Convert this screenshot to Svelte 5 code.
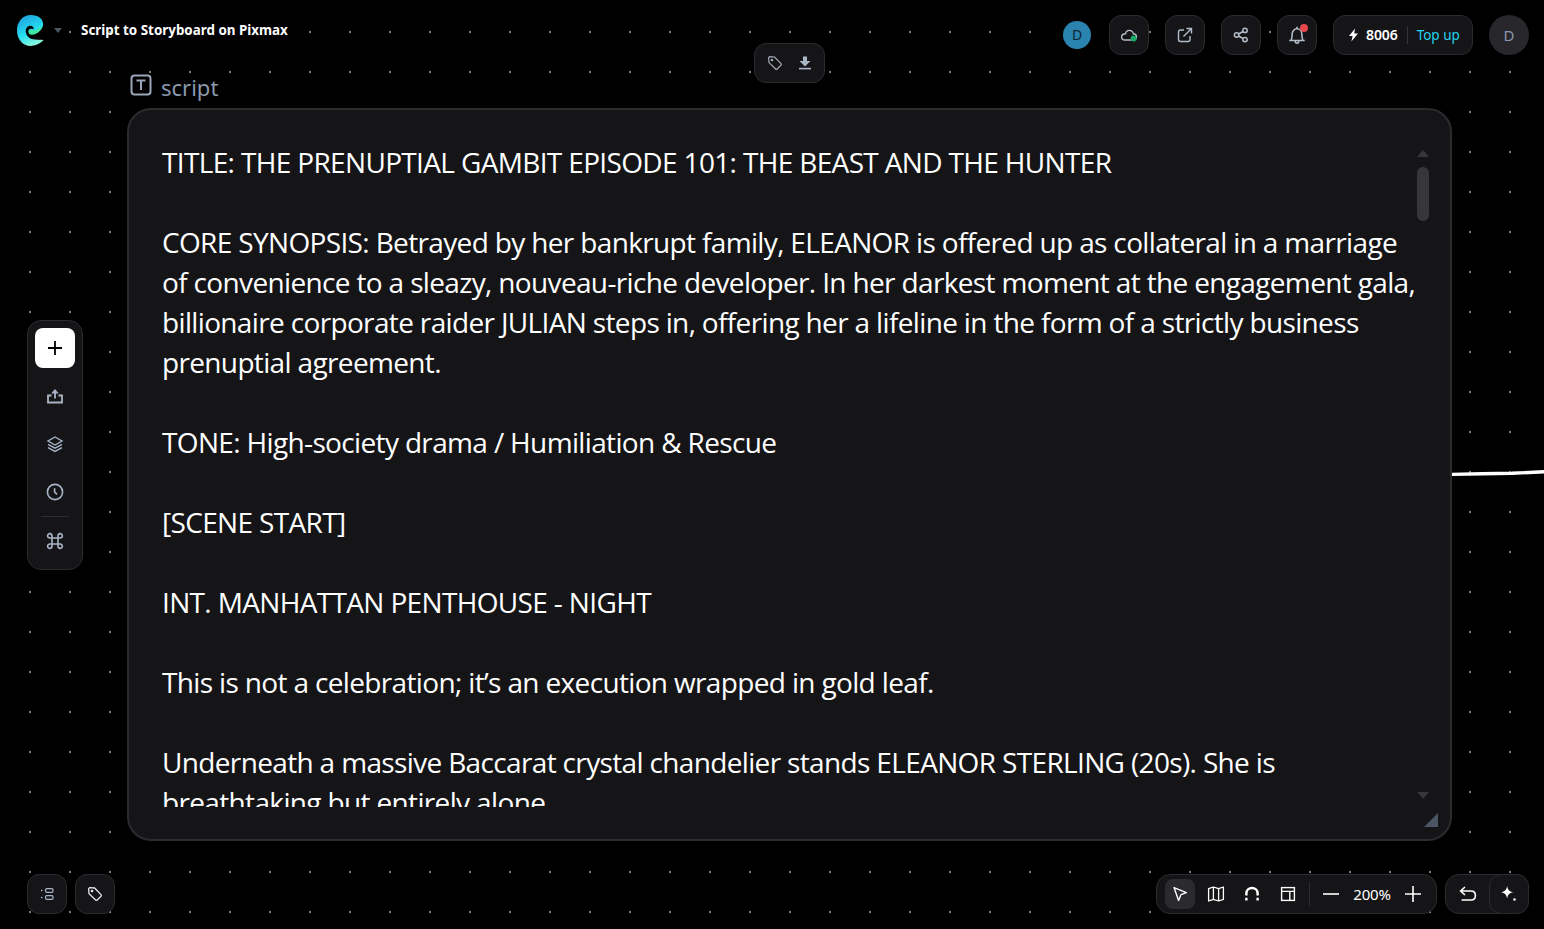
<script>
	const paragraphs = [
		'TITLE: THE PRENUPTIAL GAMBIT EPISODE 101: THE BEAST AND THE HUNTER',
		'',
		'CORE SYNOPSIS: Betrayed by her bankrupt family, ELEANOR is offered up as collateral in a marriage of convenience to a sleazy, nouveau-riche developer. In her darkest moment at the engagement gala, billionaire corporate raider JULIAN steps in, offering her a lifeline in the form of a strictly business prenuptial agreement.',
		'',
		'TONE: High-society drama / Humiliation & Rescue',
		'',
		'[SCENE START]',
		'',
		'INT. MANHATTAN PENTHOUSE - NIGHT',
		'',
		'This is not a celebration; it’s an execution wrapped in gold leaf.',
		'',
		'Underneath a massive Baccarat crystal chandelier stands ELEANOR STERLING (20s). She is breathtaking but entirely alone.'
	];
</script>

<div class="canvas">
	<svg class="edge" width="92" height="10" viewBox="0 0 92 10">
		<path d="M0 6.4 L30 5.8 L60 5.2 L92 3.8" fill="none" stroke="#fff" stroke-width="3.4" />
	</svg>

	<header class="topbar">
		<div class="brand">
			<svg class="logo" width="27" height="31" viewBox="0 0 30 30" preserveAspectRatio="none">
				<defs>
					<linearGradient id="logo-grad" x1="0.2" y1="0" x2="0.6" y2="1">
						<stop offset="0" stop-color="#1c9fe0" />
						<stop offset="0.6" stop-color="#27e0f0" />
						<stop offset="1" stop-color="#8ff7dc" />
					</linearGradient>
				</defs>
				<path
					d="M15 0C24 0 29.5 4 29 9.5C28.5 15 22 18 16.5 17.5C13.5 17.2 12 16 13 14.5C14 13 16.5 13 18.5 13.8C19 11.5 16.5 10 14 10.5C10.5 11.2 9 14.5 10 17.5C11.2 21.5 15 23.5 20 23.8C24 24 28 23.5 29.5 24.5C25 28 20 30 15 30C6.5 30 0 23.5 0 15C0 6.5 6.5 0 15 0Z"
					fill="url(#logo-grad)"
				/>
				<path d="M13 15.2C14.5 13.8 17 14 18.5 15C22 14.8 26 13 27.5 10.5C27.5 15 22 19.8 15.5 19C13.5 18.8 12.2 17 13 15.2Z" fill="#3ee6a0" />
			</svg>
			<span class="caret"></span>
			<span class="title">Script to Storyboard on Pixmax</span>
		</div>

		<div class="actions">
			<span class="avatar-small">D</span>
			<button class="square" aria-label="cloud">
				<svg width="18" height="18" viewBox="0 0 18 18" fill="none" stroke="#b4bcc9" stroke-width="1.4">
					<path d="M5 14H12.5C15 14 16.4 12.6 16.4 10.8C16.4 9 15 7.8 13.4 7.8C12.8 5.6 11.2 4.4 9.4 4.4C7.2 4.4 5.8 6 5.6 7.8C3.4 7.8 1.6 9 1.6 11C1.6 12.8 3 14 5 14Z" />
					<circle cx="13.6" cy="12.4" r="3" fill="#16a765" stroke="none" />
				</svg>
			</button>
			<button class="square" aria-label="open">
				<svg width="16" height="16" viewBox="0 0 16 16" fill="none" stroke="#b4bcc9" stroke-width="1.4">
					<path d="M7 3H3.5C2.4 3 1.5 3.9 1.5 5V12.5C1.5 13.6 2.4 14.5 3.5 14.5H11C12.1 14.5 13 13.6 13 12.5V9" />
					<path d="M6.5 9.5L14 2M9.5 1.5H14.5V6.5" />
				</svg>
			</button>
			<button class="square" aria-label="share">
				<svg width="16" height="16" viewBox="0 0 16 16" fill="none" stroke="#b4bcc9" stroke-width="1.5">
					<circle cx="3.6" cy="8" r="2.2" />
					<circle cx="12" cy="3.4" r="2.2" />
					<circle cx="12" cy="12.6" r="2.2" />
					<path d="M5.6 7L10 4.5M5.6 9L10 11.5" />
				</svg>
			</button>
			<button class="square bell" aria-label="notifications">
				<svg width="20" height="20" viewBox="0 0 18 18" fill="none" stroke="#b4bcc9" stroke-width="1.4">
					<path d="M2 14H16M3.6 14C4.4 12.6 4.6 11 4.6 8.6C4.6 5.6 6.4 3.4 9 3.4C11.6 3.4 13.4 5.6 13.4 8.6C13.4 11 13.6 12.6 14.4 14" />
					<path d="M7.4 14.4C7.4 15.6 8 16.4 9 16.4C10 16.4 10.6 15.6 10.6 14.4M9 1.6V3.4" />
				</svg>
				<span class="dot"></span>
			</button>
			<div class="credits">
				<svg width="11" height="14" viewBox="0 0 11 14"><path d="M7 0.5L1 8H4.6L3.4 13.5L10 5.6H6.2L7 0.5Z" fill="#fff" /></svg>
				<span class="amount">8006</span>
				<span class="sep"></span>
				<span class="topup">Top up</span>
			</div>
			<span class="avatar">D</span>
		</div>
	</header>

	<div class="mini-tools">
		<svg width="16" height="16" viewBox="0 0 16 16" fill="none" stroke="#a5acb8" stroke-width="1.2">
			<path d="M1.6 2.6L2.6 1.6L7.6 2L14 8.6C14.5 9.1 14.5 9.7 14 10.2L10.2 14C9.7 14.5 9.1 14.5 8.6 14L2 7.6Z" />
			<circle cx="5" cy="5" r="0.7" />
		</svg>
		<svg width="14" height="14" viewBox="0 0 14 14" fill="#a9b4c6">
			<path d="M5 0.5H9V5H12.5L7 10.4L1.5 5H5Z" />
			<rect x="1" y="11.8" width="12" height="1.6" />
		</svg>
	</div>

	<section class="node">
		<div class="node-label">
			<svg width="22" height="22" viewBox="0 0 22 22" fill="none" stroke="#9aa5b8" stroke-width="2">
				<rect x="1.5" y="1.5" width="19" height="19" rx="3" />
				<path d="M6.5 6.6H15.5M11 6.6V16" />
			</svg>
			<span>script</span>
		</div>
		<div class="card">
			<div class="content">
				{#each paragraphs as p}
					<p>{p}</p>
				{/each}
			</div>
			<div class="scrollbar">
				<span class="arrow up"></span>
				<span class="thumb"></span>
				<span class="arrow down"></span>
			</div>
			<span class="resize"></span>
		</div>
	</section>

	<nav class="sidebar">
		<button class="add" aria-label="add">
			<svg width="18" height="18" viewBox="0 0 18 18" stroke="#000" stroke-width="1.8"><path d="M9 2V16M2 9H16" /></svg>
		</button>
		<button class="side-btn" aria-label="upload">
			<svg width="18" height="18" viewBox="0 0 18 18" fill="none" stroke="#a9b4c6" stroke-width="1.8">
				<path d="M5.5 8.5H2V15.5H16V8.5H12.5" />
				<path d="M9 11.5V4" />
				<path d="M5.2 6.4L9 2L12.8 6.4Z" fill="#a9b4c6" stroke="none" />
			</svg>
		</button>
		<button class="side-btn" aria-label="layers">
			<svg width="18" height="18" viewBox="0 0 18 18" fill="none" stroke="#a9b4c6" stroke-width="1.4">
				<path d="M9 2L16 6L9 10L2 6Z" />
				<path d="M2 9.4L9 13.2L16 9.4M2 12.6L9 16.4L16 12.6" />
			</svg>
		</button>
		<button class="side-btn" aria-label="history">
			<svg width="18" height="18" viewBox="0 0 18 18" fill="none" stroke="#a9b4c6" stroke-width="1.6">
				<circle cx="9" cy="9" r="7.6" />
				<path d="M8.6 5.2V9L11 11.4" />
			</svg>
		</button>
		<span class="side-sep"></span>
		<button class="side-btn" aria-label="shortcuts">
			<svg width="18" height="18" viewBox="0 0 18 18" fill="none" stroke="#a9b4c6" stroke-width="1.6">
				<path d="M6 6H12V12H6ZM6 6H4A2.2 2.2 0 1 1 6 4ZM12 6V4A2.2 2.2 0 1 1 14 6ZM12 12H14A2.2 2.2 0 1 1 12 14ZM6 12V14A2.2 2.2 0 1 1 4 12Z" />
			</svg>
		</button>
	</nav>

	<footer class="bottombar">
		<div class="bottom-left">
			<button class="square" aria-label="outline">
				<svg width="14" height="14" viewBox="0 0 14 14" fill="none" stroke="#a9b4c6" stroke-width="1.2">
					<rect x="5.6" y="1.6" width="7.4" height="3.8" rx="1.2" />
					<rect x="5.6" y="8.6" width="7.4" height="3.8" rx="1.2" />
					<path d="M1 2.4L3 3.5L1 4.6ZM1 9.4L3 10.5L1 11.6Z" fill="#a9b4c6" stroke="none" />
				</svg>
			</button>
			<button class="square" aria-label="tags">
				<svg width="16" height="16" viewBox="0 0 16 16" fill="none" stroke="#e4e6ea" stroke-width="1.3">
					<path d="M1.6 2.6L2.6 1.6L7.6 2L14 8.6C14.5 9.1 14.5 9.7 14 10.2L10.2 14C9.7 14.5 9.1 14.5 8.6 14L2 7.6Z" />
					<circle cx="5" cy="5" r="0.7" />
				</svg>
			</button>
		</div>

		<div class="bottom-right">
			<div class="toolbar">
				<button class="tool active" aria-label="select">
					<svg width="16" height="16" viewBox="0 0 16 16" fill="none" stroke="#fff" stroke-width="1.4" stroke-linejoin="round">
						<path d="M2 1.6L14.4 6.6L9 8.6L6.6 14.4Z" />
					</svg>
				</button>
				<button class="tool" aria-label="map">
					<svg width="18" height="18" viewBox="0 0 18 18" fill="none" stroke="#fff" stroke-width="1.3" stroke-linejoin="round">
						<path d="M1.6 3.6L6.4 2L11.6 3.6L16.4 2V14.4L11.6 16L6.4 14.4L1.6 16ZM6.4 2V14.4M11.6 3.6V16" />
					</svg>
				</button>
				<button class="tool" aria-label="snap">
					<svg width="18" height="18" viewBox="0 0 18 18" fill="none" stroke="#fff" stroke-width="2.4">
						<path d="M3.4 10.4V8.4C3.4 5 6 3 9 3C12 3 14.6 5 14.6 8.4V10.4" />
						<path d="M3.4 12.8V15.6M14.6 12.8V15.6" />
					</svg>
				</button>
				<button class="tool" aria-label="layout">
					<svg width="16" height="16" viewBox="0 0 16 16" fill="none" stroke="#fff" stroke-width="1.4">
						<rect x="1.6" y="1.6" width="12.8" height="12.8" />
						<path d="M1.6 5.4H14.4M9.8 5.4V14.4" />
					</svg>
				</button>
				<span class="tool-sep"></span>
				<button class="tool zoom" aria-label="zoom out">
					<svg width="16" height="16" viewBox="0 0 16 16" stroke="#fff" stroke-width="1.6"><path d="M0 8H16" /></svg>
				</button>
				<span class="percent">200%</span>
				<button class="tool zoom" aria-label="zoom in">
					<svg width="16" height="16" viewBox="0 0 16 16" stroke="#fff" stroke-width="1.6"><path d="M0 8H16M8 0V16" /></svg>
				</button>
			</div>
			<div class="history">
				<button class="undo" aria-label="undo">
					<svg width="18" height="16" viewBox="0 0 18 16" fill="none" stroke="#fff" stroke-width="1.6">
						<path d="M6 1L1.6 5L6 9M1.6 5H12C14.8 5 16.4 6.8 16.4 9.4C16.4 12 14.8 14 12 14H2.6" />
					</svg>
				</button>
				<button class="square spark" aria-label="assistant">
					<svg width="20" height="20" viewBox="0 0 16 16" fill="#fff">
						<path d="M6.5 1.5C7 4.6 8.2 5.8 11.5 6.5C8.2 7.2 7 8.4 6.5 11.5C6 8.4 4.8 7.2 1.5 6.5C4.8 5.8 6 4.6 6.5 1.5Z" />
						<circle cx="12.4" cy="12.4" r="1" />
					</svg>
				</button>
			</div>
		</div>
	</footer>
</div>

<style>
	:global(body) {
		margin: 0;
		background: #000;
	}

	.canvas {
		position: relative;
		width: 1544px;
		height: 929px;
		overflow: hidden;
		display: flex;
		flex-direction: column;
		justify-content: space-between;
		box-sizing: border-box;
		padding: 15px 15px 15px 16px;
		background-color: #000;
		background-image: radial-gradient(circle, #7a7a7a 0.9px, transparent 1.1px);
		background-size: 40px 40px;
		background-position: 10px 12px;
		font-family: 'Noto Sans', sans-serif;
		color: #fff;
	}

	button {
		padding: 0;
		font: inherit;
		display: flex;
		align-items: center;
		justify-content: center;
	}

	.edge {
		position: absolute;
		left: 1452px;
		top: 468px;
	}

	.topbar {
		display: flex;
		justify-content: space-between;
		align-items: flex-start;
		position: relative;
		z-index: 3;
	}

	.brand {
		display: flex;
		align-items: center;
		height: 30px;
	}

	.logo {
		margin-left: 1px;
		flex: none;
	}

	.caret {
		margin-left: 10px;
		margin-top: 1px;
		border-left: 4.5px solid transparent;
		border-right: 4.5px solid transparent;
		border-top: 5px solid #4b5563;
	}

	.title {
		margin-left: 19px;
		font-size: 13.4px;
		font-weight: 700;
		white-space: nowrap;
	}

	.actions {
		display: flex;
		align-items: center;
		gap: 16px;
	}

	.avatar-small {
		width: 28px;
		height: 27px;
		padding-bottom: 1px;
		margin-right: 2px;
		border-radius: 50%;
		background: #2b83b0;
		color: #0b2535;
		font-size: 14px;
		display: flex;
		align-items: center;
		justify-content: center;
	}

	.square {
		width: 40px;
		height: 40px;
		box-sizing: border-box;
		border: 1px solid #2b2b30;
		border-radius: 12px;
		background: #151518;
		position: relative;
	}

	.dot {
		position: absolute;
		top: 8px;
		right: 8px;
		width: 8px;
		height: 8px;
		border-radius: 50%;
		background: #e5484d;
	}

	.credits {
		width: 140px;
		height: 40px;
		box-sizing: border-box;
		border: 1px solid #2b2b30;
		border-radius: 12px;
		background: #151518;
		display: flex;
		align-items: center;
		padding-left: 14px;
	}

	.amount {
		margin-left: 7px;
		padding-bottom: 1px;
		font-size: 14px;
		font-weight: 600;
		letter-spacing: -0.1px;
	}

	.sep {
		width: 1px;
		height: 18px;
		margin: 0 9px;
		background: #34343a;
	}

	.topup {
		padding-bottom: 1px;
		font-size: 13.5px;
		color: #22d3ee;
	}

	.avatar {
		width: 40px;
		height: 39px;
		padding-bottom: 1px;
		border-radius: 50%;
		background: #27272c;
		color: #8b98ad;
		font-size: 15px;
		display: flex;
		align-items: center;
		justify-content: center;
	}

	.mini-tools {
		position: absolute;
		left: 754px;
		top: 43px;
		width: 71px;
		height: 40px;
		box-sizing: border-box;
		border: 1px solid #2b2b30;
		border-radius: 12px;
		background: #151518;
		display: flex;
		align-items: center;
		justify-content: center;
		gap: 15px;
		z-index: 4;
	}

	.node {
		position: absolute;
		left: 127px;
		top: 71px;
		width: 1325px;
	}

	.node-label {
		display: flex;
		align-items: center;
		gap: 9px;
		height: 28px;
		padding: 0 0 9px 3px;
		color: #8b98ad;
		font-size: 22px;
		line-height: 30px;
	}

	.node-label span {
		margin-top: 3px;
	}

	.card {
		position: relative;
		height: 733px;
		box-sizing: border-box;
		border: 2px solid #2b2b30;
		border-radius: 24px;
		background: #151518;
		padding: 32px 38px 33px 33px;
	}

	.content {
		height: 665px;
		overflow: hidden;
		width: 1258px;
		font-family: 'Open Sans', sans-serif;
		font-size: 28px;
		letter-spacing: -0.65px;
		line-height: 40px;
		color: #fff;
	}

	.content p {
		margin: 0;
		min-height: 40px;
	}

	.scrollbar {
		position: absolute;
		top: 40px;
		right: 21px;
		bottom: 40px;
		width: 12px;
		display: flex;
		flex-direction: column;
		align-items: center;
	}

	.arrow {
		border-left: 6px solid transparent;
		border-right: 6px solid transparent;
	}

	.arrow.up {
		border-bottom: 7px solid #36363b;
	}

	.arrow.down {
		margin-top: auto;
		border-top: 7px solid #36363b;
	}

	.thumb {
		margin-top: 10px;
		width: 12px;
		height: 54px;
		border-radius: 6px;
		background: #36363b;
	}

	.resize {
		position: absolute;
		right: 12px;
		bottom: 12px;
		width: 14px;
		height: 14px;
		background: #4b5563;
		clip-path: polygon(100% 0, 100% 100%, 0 100%);
	}

	.sidebar {
		position: absolute;
		left: 27px;
		top: 320px;
		width: 56px;
		box-sizing: border-box;
		padding: 7px 7px 8px;
		border: 1px solid #2b2b30;
		border-radius: 14px;
		background: #151518;
		display: flex;
		flex-direction: column;
		align-items: center;
		gap: 8px;
	}

	.add {
		width: 40px;
		height: 40px;
		border: none;
		border-radius: 8px;
		background: #fff;
	}

	.side-btn {
		width: 40px;
		height: 40px;
		border: none;
		background: transparent;
	}

	.side-sep {
		width: 28px;
		height: 1px;
		background: #2b2b30;
		margin: -4px 0;
	}

	.bottombar {
		display: flex;
		justify-content: space-between;
		align-items: flex-end;
		position: relative;
		z-index: 3;
		padding-left: 11px;
	}

	.bottom-left {
		display: flex;
		gap: 8px;
	}

	.bottom-right {
		display: flex;
		gap: 8px;
	}

	.toolbar {
		width: 281px;
		height: 40px;
		box-sizing: border-box;
		border: 1px solid #2b2b30;
		border-radius: 14px;
		background: #151518;
		display: flex;
		align-items: center;
		padding-left: 8px;
		gap: 6px;
	}

	.tool {
		width: 30px;
		height: 30px;
		border: none;
		border-radius: 8px;
		background: transparent;
	}

	.tool.active {
		background: #2a2a2f;
	}

	.tool-sep {
		width: 1px;
		height: 24px;
		background: #2b2b30;
	}

	.percent {
		font-size: 15px;
		width: 42px;
		text-align: center;
		margin: 0 -1px;
		white-space: nowrap;
		letter-spacing: -0.2px;
	}

	.history {
		width: 84px;
		height: 40px;
		box-sizing: border-box;
		border: 1px solid #2b2b30;
		border-radius: 14px;
		background: #151518;
		display: flex;
		align-items: center;
		justify-content: space-between;
	}

	.undo {
		width: 43px;
		height: 38px;
		border: none;
		background: transparent;
	}

	.spark {
		margin: -1px;
	}
</style>
